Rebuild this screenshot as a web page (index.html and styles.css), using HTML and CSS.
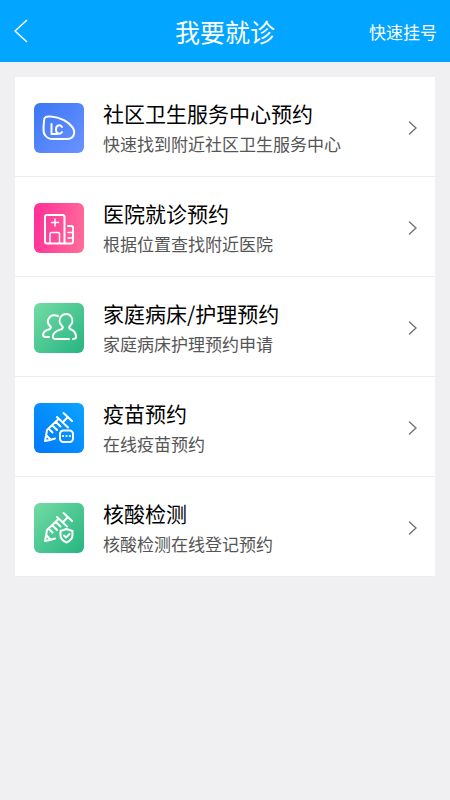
FILE: index.html
```html
<!DOCTYPE html>
<html lang="zh-CN">
<head>
<meta charset="utf-8">
<meta name="viewport" content="width=device-width, initial-scale=1">
<title>我要就诊</title>
<link rel="stylesheet" href="styles.css">
</head>
<body>
<header class="topbar">
  <button class="back" type="button" aria-label="返回">
    <svg width="16" height="24" viewBox="0 0 16 24"><path d="M13.500 1.500L2 12L13.500 22.500"/></svg>
  </button>
  <h1 class="title">我要就诊</h1>
  <a class="quick" href="#">快速挂号</a>
</header>
<main class="content">
  <nav class="menu">
    <a class="item" href="#">
      <svg class="icon blue" viewBox="0 0 50 50">
        <path d="M10 18C10 14 12 13 17 13.500C26 14 35 19 39 25C42 31 39 36 33 36H19C12 36 9 31 9.500 25Z"/>
        <path d="M17.500 21V31H23M28 24C26 21 22 22 22 26.500S26 32 28 29"/>
      </svg>
      <span class="text"><span class="name">社区卫生服务中心预约</span><span class="desc">快速找到附近社区卫生服务中心</span></span>
      <svg class="arrow" viewBox="0 0 10 14"><path d="M1.500 1L8 7L1.500 13"/></svg>
    </a>
    <a class="item" href="#">
      <svg class="icon pink" viewBox="0 0 50 50">
        <path d="M30.500 40.500H13Q11 40.500 11 38.500V14Q11 12 13 12H28.500Q30.500 12 30.500 14V40.500H37Q39 40.500 39 38V25Q39 23 37 23H34"/>
        <path class="thin" d="M21 16V23M17.500 19.500H24.500M16 40V31Q16 29.500 17.500 29.500H24Q25.500 29.500 25.500 31V40M34 29.500H38M34 35H38"/>
      </svg>
      <span class="text"><span class="name">医院就诊预约</span><span class="desc">根据位置查找附近医院</span></span>
      <svg class="arrow" viewBox="0 0 10 14"><path d="M1.500 1L8 7L1.500 13"/></svg>
    </a>
    <a class="item" href="#">
      <svg class="icon green" viewBox="0 0 50 50">
        <path d="M35 36H22Q18 36 19 32.500C20 28 25 27 28 26C29 25 29 24 28 23C25 20 25 16 27 13.500C29.500 10 35 10 37 13.500C39 16 39 20 36 23C35 24 35 25 36 26C39 27 42 29 42 34Q42 36 39 36"/>
        <path d="M24 13C21 11.500 17 12 15 15C13 18 14 21 16 23C17 24 17 25 16 26C12 27 9 29 9 32Q9 34 12 34H15"/>
      </svg>
      <span class="text"><span class="name">家庭病床/护理预约</span><span class="desc">家庭病床护理预约申请</span></span>
      <svg class="arrow" viewBox="0 0 10 14"><path d="M1.500 1L8 7L1.500 13"/></svg>
    </a>
    <a class="item" href="#">
      <svg class="icon azure" viewBox="0 0 50 50">
        <path d="M29.500 10L38 18M34 14L29.500 18.500M23 14L34 24.500M24 16.500L13 27L12 33L11 38L16 37L21 35.500M12.500 32.500L16 36M15 26L18.500 29.500M18.500 22.500L23 27M22 19L26.500 23.500"/>
        <rect x="26" y="27.500" width="13" height="11.500" rx="3.500"/>
        <path d="M29 33H29.200M32.400 33H32.600M35.800 33H36"/>
      </svg>
      <span class="text"><span class="name">疫苗预约</span><span class="desc">在线疫苗预约</span></span>
      <svg class="arrow" viewBox="0 0 10 14"><path d="M1.500 1L8 7L1.500 13"/></svg>
    </a>
    <a class="item" href="#">
      <svg class="icon green" viewBox="0 0 50 50">
        <path d="M29.500 10L38 18M34 14L29.500 18.500M23 14L33 23.500M24 16.500L13 27L12 33L11 38L16 37L21 35.500M12.500 32.500L16 36M15 26L18.500 29.500M18.500 22.500L23 27M22 19L26.500 23.500"/>
        <path d="M32.500 26L38.500 28V32C38.500 36 36 38 32.500 39.500C29 38 26.500 36 26.500 32V28ZM30 32.500L32 34.500L35.500 31"/>
      </svg>
      <span class="text"><span class="name">核酸检测</span><span class="desc">核酸检测在线登记预约</span></span>
      <svg class="arrow" viewBox="0 0 10 14"><path d="M1.500 1L8 7L1.500 13"/></svg>
    </a>
  </nav>
</main>
</body>
</html>
```
FILE: styles.css
```css
* {
  box-sizing: border-box;
}

body {
  margin: 0;
  min-height: 100vh;
  background: #f0f0f3;
  color: #000;
  font-family: "Noto Sans CJK SC", sans-serif;
}

a {
  color: inherit;
  text-decoration: none;
}

svg {
  fill: none;
  stroke: #fff;
  stroke-width: 2;
  stroke-linecap: round;
  stroke-linejoin: round;
}

.topbar {
  display: grid;
  grid-template-columns: 1fr auto 1fr;
  align-items: center;
  height: 62px;
  padding: 0 13px;
  background: #02a5ff;
  color: #fff;
}

.back {
  display: flex;
  justify-self: start;
  padding: 0;
  border: 0;
  background: none;
}

.back svg {
  stroke-width: 1.5;
}

.title {
  margin: 0;
  font-size: 25px;
  font-weight: 400;
}

.quick {
  justify-self: end;
  font-size: 17px;
}

.content {
  padding: 15px;
}

.menu {
  background: #fff;
}

.item {
  display: flex;
  align-items: center;
  gap: 19px;
  min-height: 100px;
  padding: 19px 17px 17px 19px;
  border-bottom: 1px solid #ececee;
}

.icon {
  flex: none;
  width: 50px;
  height: 50px;
  border-radius: 6px;
}

.blue {
  background: linear-gradient(135deg, #3a76f6, #6b93ff);
}

.pink {
  background: linear-gradient(100deg, #ff2d9a, #ff6f98);
}

.green {
  background: linear-gradient(135deg, #74dba4, #25b581);
}

.azure {
  background: linear-gradient(45deg, #0077fa, #0ba4ff);
}

.thin {
  stroke-width: 1.5;
}

.text {
  display: flex;
  flex: 1;
  flex-direction: column;
}

.name {
  font-size: 21px;
  line-height: 32px;
}

.desc {
  color: #555;
  font-size: 17px;
  line-height: 30px;
}

.arrow {
  flex: none;
  width: 10px;
  height: 14px;
  stroke: #777;
  stroke-width: 1.5;
}
```
